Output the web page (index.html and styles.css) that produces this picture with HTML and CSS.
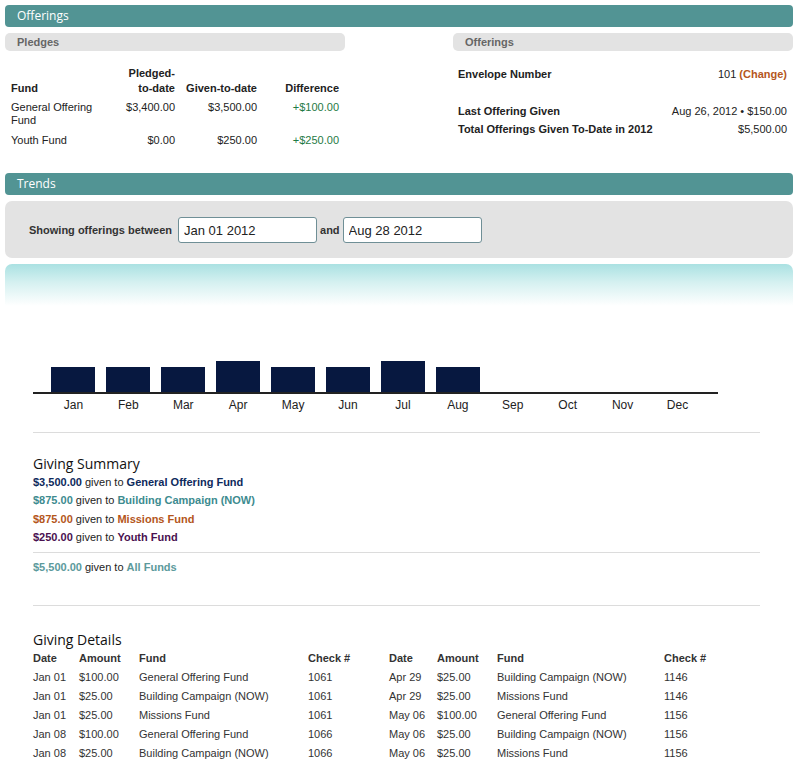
FILE: index.html
```html
<!DOCTYPE html>
<html>
<head>
<meta charset="utf-8">
<link rel="stylesheet" href="styles.css">
</head>
<body>
<div class="page">
  <div class="bar-head">Offerings</div>
  <div class="cols">
    <div class="col">
      <div class="subbar">Pledges</div>
      <table class="pledges">
        <thead>
          <tr><th class="c-fund">Fund</th><th class="num">Pledged-<br>to-date</th><th class="num">Given-to-date</th><th class="num">Difference</th></tr>
        </thead>
        <tbody>
          <tr><td class="c-fund">General Offering Fund</td><td class="num">$3,400.00</td><td class="num">$3,500.00</td><td class="num pos">+$100.00</td></tr>
          <tr><td class="c-fund">Youth Fund</td><td class="num">$0.00</td><td class="num">$250.00</td><td class="num pos">+$250.00</td></tr>
        </tbody>
      </table>
    </div>
    <div class="col">
      <div class="subbar">Offerings</div>
      <div class="info">
        <div class="info-row envelope"><span class="lbl">Envelope Number</span><span class="val">101 <a class="change">(Change)</a></span></div>
        <div class="info-row last"><span class="lbl">Last Offering Given</span><span class="val">Aug 26, 2012 &bull; $150.00</span></div>
        <div class="info-row"><span class="lbl">Total Offerings Given To-Date in 2012</span><span class="val">$5,500.00</span></div>
      </div>
    </div>
  </div>

  <div class="bar-head trends">Trends</div>
  <div class="filter">
    <span class="flabel">Showing offerings between</span>
    <input class="date date-first" type="text" value="Jan 01 2012">
    <span class="flabel">and</span>
    <input class="date" type="text" value="Aug 28 2012">
  </div>
  <div class="gradient"></div>

  <div class="chart">
    <div class="bars">
      <div class="slot"><div class="bar" style="height:25px"></div></div>
      <div class="slot"><div class="bar" style="height:25px"></div></div>
      <div class="slot"><div class="bar" style="height:25px"></div></div>
      <div class="slot"><div class="bar" style="height:31px"></div></div>
      <div class="slot"><div class="bar" style="height:25px"></div></div>
      <div class="slot"><div class="bar" style="height:25px"></div></div>
      <div class="slot"><div class="bar" style="height:31px"></div></div>
      <div class="slot"><div class="bar" style="height:25px"></div></div>
      <div class="slot"></div>
      <div class="slot"></div>
      <div class="slot"></div>
      <div class="slot"></div>
    </div>
    <div class="months">
      <span>Jan</span><span>Feb</span><span>Mar</span><span>Apr</span><span>May</span><span>Jun</span><span>Jul</span><span>Aug</span><span>Sep</span><span>Oct</span><span>Nov</span><span>Dec</span>
    </div>
  </div>

  <div class="content">
    <hr class="sep">
    <h2 class="h-summary">Giving Summary</h2>
    <ul class="summary">
      <li class="f-general"><b>$3,500.00</b> given to <b>General Offering Fund</b></li>
      <li class="f-building"><b>$875.00</b> given to <b>Building Campaign (NOW)</b></li>
      <li class="f-missions"><b>$875.00</b> given to <b>Missions Fund</b></li>
      <li class="f-youth"><b>$250.00</b> given to <b>Youth Fund</b></li>
    </ul>
    <hr class="sep sep-tight">
    <div class="summary-total f-all"><b>$5,500.00</b> given to <b>All Funds</b></div>
    <hr class="sep sep-after">
    <h2 class="h-details">Giving Details</h2>
    <div class="details">
      <table class="dtable">
        <thead><tr><th class="d-date">Date</th><th class="d-amt">Amount</th><th class="d-fund">Fund</th><th class="d-chk">Check #</th></tr></thead>
        <tbody>
          <tr><td>Jan 01</td><td>$100.00</td><td>General Offering Fund</td><td>1061</td></tr>
          <tr><td>Jan 01</td><td>$25.00</td><td>Building Campaign (NOW)</td><td>1061</td></tr>
          <tr><td>Jan 01</td><td>$25.00</td><td>Missions Fund</td><td>1061</td></tr>
          <tr><td>Jan 08</td><td>$100.00</td><td>General Offering Fund</td><td>1066</td></tr>
          <tr><td>Jan 08</td><td>$25.00</td><td>Building Campaign (NOW)</td><td>1066</td></tr>
        </tbody>
      </table>
      <table class="dtable dtable-2">
        <thead><tr><th class="d-date">Date</th><th class="d-amt">Amount</th><th class="d-fund">Fund</th><th class="d-chk">Check #</th></tr></thead>
        <tbody>
          <tr><td>Apr 29</td><td>$25.00</td><td>Building Campaign (NOW)</td><td>1146</td></tr>
          <tr><td>Apr 29</td><td>$25.00</td><td>Missions Fund</td><td>1146</td></tr>
          <tr><td>May 06</td><td>$100.00</td><td>General Offering Fund</td><td>1156</td></tr>
          <tr><td>May 06</td><td>$25.00</td><td>Building Campaign (NOW)</td><td>1156</td></tr>
          <tr><td>May 06</td><td>$25.00</td><td>Missions Fund</td><td>1156</td></tr>
        </tbody>
      </table>
    </div>
  </div>
</div>
</body>
</html>
```

FILE: styles.css
```css
* { box-sizing: border-box; }
html, body { margin: 0; padding: 0; background: #fff; }
body {
  font-family: "Liberation Sans", Arial, sans-serif;
  font-size: 11px;
  color: #222;
}
.page { padding: 5px 7px 0 5px; }

.bar-head {
  height: 22px;
  line-height: 22px;
  background: #529494;
  color: #fff;
  border-radius: 4px;
  padding-left: 12px;
  font-family: "Open Sans", "DejaVu Sans", sans-serif;
  font-size: 12px;
}

.cols {
  display: flex;
  justify-content: space-between;
  margin-top: 6px;
  height: 140px;
}
.col { width: 340px; }
.subbar {
  height: 18px;
  line-height: 18px;
  background: #e3e3e3;
  border-radius: 5px;
  padding-left: 12px;
  font-weight: bold;
  color: #666;
  font-size: 11px;
}

.pledges {
  border-collapse: collapse;
  margin: 15px 0 0 6px;
  width: 328px;
  table-layout: fixed;
}
.pledges th, .pledges td { padding: 0; line-height: 13px; vertical-align: top; }
.pledges th { font-weight: bold; line-height: 15px; vertical-align: bottom; padding-bottom: 1px; }
.pledges td { padding: 4px 0 3px; }
.pledges .c-fund { text-align: left; width: 90px; padding-right: 0; }
.pledges .num { text-align: right; }
.pledges th:nth-child(2) { width: 74px; }
.pledges th:nth-child(3), .pledges th:nth-child(4) { width: 82px; }
.pledges .pos { color: #1f7a45; }

.info { padding: 14px 6px 0 5px; }
.info-row {
  display: flex;
  justify-content: space-between;
  line-height: 18px;
}
.info-row .lbl { font-weight: bold; }
.info-row.envelope { margin-bottom: 19px; }
.change { color: #b5561d; font-weight: bold; }

.filter {
  margin-top: 6px;
  height: 57px;
  background: #e3e3e3;
  border-radius: 7px;
  display: flex;
  align-items: center;
  padding: 1px 0 0 24px;
}
.flabel { font-weight: bold; color: #333; }
.date {
  width: 139px;
  height: 26px;
  margin: 0 3px;
  border: 1px solid #6f8f96;
  border-radius: 3px;
  background: #fff;
  padding: 0 5px;
  font-family: "Liberation Sans", Arial, sans-serif;
  font-size: 13px;
  color: #222;
}
.date-first { margin-left: 6px; }

.gradient {
  margin-top: 6px;
  height: 42px;
  border-radius: 7px 7px 0 0;
  background: linear-gradient(to bottom, #aae1e2 0%, #d6f1f1 45%, #ffffff 100%);
}

.chart { margin: 0 0 0 28px; width: 685px; padding-top: 45px; }
.bars {
  display: grid;
  grid-template-columns: repeat(12, 1fr);
  height: 43px;
  padding: 0 13px;
  border-bottom: 2px solid #222;
  align-items: end;
}
.slot { display: flex; justify-content: center; align-items: flex-end; height: 100%; }
.bar { width: 44px; background: #071840; }
.months {
  display: grid;
  grid-template-columns: repeat(12, 1fr);
  padding: 4px 13px 0;
  font-size: 12px;
  line-height: 14px;
  text-align: center;
  color: #222;
}

.content { margin-left: 28px; width: 727px; }
.sep { border: 0; border-top: 1px solid #dcdcdc; margin: 20px 0 0; height: 0; }
.sep-tight { margin-top: 6px; }
.sep-after { margin-top: 29px; }

h2 {
  font-family: "Open Sans", "DejaVu Sans", sans-serif;
  font-weight: normal;
  font-size: 14px;
  color: #111;
  margin: 0;
  line-height: 18px;
}
.h-summary { margin-top: 22px; }
.summary { list-style: none; margin: 0; padding: 0; }
.summary li { line-height: 18.3px; }
.summary-total { line-height: 18px; margin-top: 5px; }

.f-general b { color: #0e2a5c; }
.f-building b { color: #3d8b8f; }
.f-missions b { color: #b4561b; }
.f-youth b { color: #4a1150; }
.f-all b { color: #5c9a9c; }

.h-details { margin-top: 25px; }
.details { display: flex; }
.dtable { border-collapse: collapse; table-layout: fixed; width: 356px; }
.dtable th, .dtable td { text-align: left; padding: 0; line-height: 19px; white-space: nowrap; color: #333; }
.dtable th { font-weight: bold; }
.d-date { width: 46px; }
.d-amt { width: 60px; }
.d-fund { width: 169px; }
.d-chk { width: 81px; }
.dtable-2 .d-date { width: 48px; }
.dtable-2 .d-fund { width: 167px; }
```
